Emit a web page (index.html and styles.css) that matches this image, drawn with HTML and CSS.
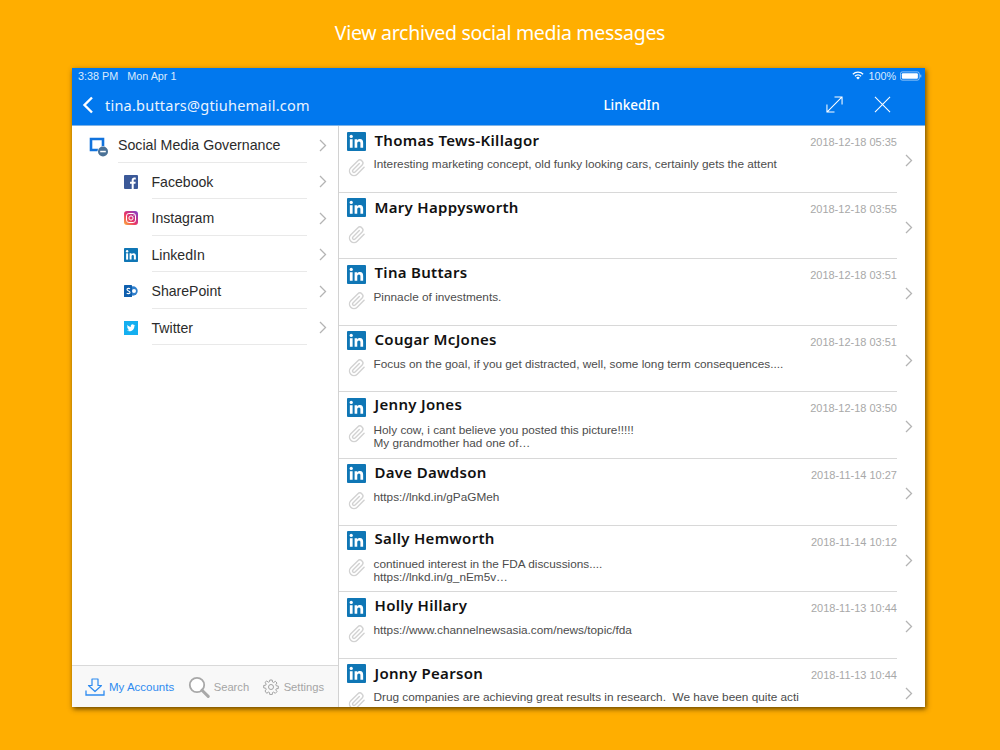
FILE: index.html
```html
<!DOCTYPE html>
<html lang="en">
<head>
<meta charset="utf-8">
<title>View archived social media messages</title>
<link rel="stylesheet" href="styles.css">
</head>
<body>
<svg class="defs" width="0" height="0" aria-hidden="true">
  <symbol id="li" viewBox="0 0 20 20"><rect width="20" height="20" rx="1" fill="#0f76b5"/><rect x="3" y="7.6" width="2.9" height="9" fill="#fff"/><circle cx="4.45" cy="4.7" r="1.7" fill="#fff"/><path d="M8 7.6h2.8v1.3c.6-1 1.6-1.5 2.9-1.5 2.4 0 3.3 1.6 3.3 4v5.2h-2.9v-4.7c0-1.2-.4-2-1.5-2-1.200 0-1.800.8-1.800 2.100v4.600H8z" fill="#fff"/></symbol>
  <symbol id="clip" viewBox="0 0 24 24"><path d="M21.440 11.050l-9.190 9.190a6 6 0 0 1-8.490-8.490l9.190-9.190a4 4 0 0 1 5.660 5.660l-9.200 9.190a2 2 0 0 1-2.830-2.830l8.490-8.480" fill="none" stroke="#d2d2d2" stroke-width="1.900" stroke-linecap="round" stroke-linejoin="round"/></symbol>
  <symbol id="chev" viewBox="0 0 8 13"><path d="M1 1l5.500 5.500L1 12" fill="none" stroke="currentColor" stroke-width="1.300"/></symbol>
</svg>

<h1 class="caption">View archived social media messages</h1>

<main class="device">
  <div class="status">
    <span>3:38 PM</span><span class="status-date">Mon Apr 1</span>
    <span class="status-right">
      <svg class="wifi" viewBox="0 0 14 10"><path d="M7 9.800 4.900 7.500a3 3 0 0 1 4.200 0z" fill="#fff"/><path d="M3.400 5.800a5 5 0 0 1 7.200 0M1 3.500a8.400 8.400 0 0 1 12 0" fill="none" stroke="#fff" stroke-width="1.500"/></svg>
      <span>100%</span>
      <svg class="battery" viewBox="0 0 24 10"><rect x=".5" y=".5" width="20.500" height="9" rx="2" fill="none" stroke="#fff" stroke-opacity=".6"/><rect x="2" y="2" width="17.500" height="6" rx="1" fill="#fff"/><rect x="22" y="3.500" width="1.200" height="3" fill="#fff" fill-opacity=".6"/></svg>
    </span>
  </div>

  <header class="navbar">
    <div class="nav-left">
      <svg class="back" viewBox="0 0 12 18"><path d="M10 1.500 2.500 9l7.500 7.500" fill="none" stroke="#fff" stroke-width="2.400"/></svg>
      <span class="account">tina.buttars@gtiuhemail.com</span>
    </div>
    <div class="nav-right">
      <span class="nav-title">LinkedIn</span>
      <svg class="nav-expand" viewBox="0 0 18 18"><path d="M1 17 17 1M9 1h8v8M1 9v8h8" fill="none" stroke="#fff" stroke-width="1.100"/></svg>
      <svg class="nav-close" viewBox="0 0 18 18"><path d="M1 1l16 16M17 1 1 17" fill="none" stroke="#fff" stroke-width="1.100"/></svg>
    </div>
  </header>

  <div class="panes">
    <aside class="sidebar">
      <ul class="menu">
        <li class="menu-root">
          <svg class="root-icon" viewBox="0 0 20 20"><path d="M2 2h12v11H2z" fill="none" stroke="#1173dd" stroke-width="2.600"/><circle cx="14" cy="14.500" r="5.500" fill="#fff"/><circle cx="14" cy="14.500" r="5" fill="#4a7196"/><rect x="11.200" y="13.800" width="5.600" height="1.500" fill="#fff"/></svg>
          <span class="menu-text">Social Media Governance</span>
          <svg class="chev"><use href="#chev"/></svg>
        </li>
        <li class="menu-item">
          <svg class="net-icon" viewBox="0 0 14 14"><rect width="14" height="14" rx="1" fill="#3b5998"/><path d="M9.700 14V8.800h1.700l.3-2H9.700V5.500c0-.6.200-1 1-1h1.100V2.700c-.2 0-.8-.1-1.500-.1-1.500 0-2.600.9-2.600 2.600v1.600H6v2h1.700V14z" fill="#fff"/></svg>
          <span class="menu-text">Facebook</span>
          <svg class="chev"><use href="#chev"/></svg>
        </li>
        <li class="menu-item">
          <svg class="net-icon" viewBox="0 0 14 14"><defs><linearGradient id="ig" x1="0" y1="1" x2="1" y2="0"><stop offset="0" stop-color="#fdb33a"/><stop offset=".45" stop-color="#e8336a"/><stop offset="1" stop-color="#7a3fd0"/></linearGradient></defs><rect width="14" height="14" rx="3" fill="url(#ig)"/><rect x="2.500" y="2.500" width="9" height="9" rx="2.400" fill="none" stroke="#fff"/><circle cx="7" cy="7" r="2.100" fill="none" stroke="#fff"/><circle cx="10" cy="4" r=".6" fill="#fff"/></svg>
          <span class="menu-text">Instagram</span>
          <svg class="chev"><use href="#chev"/></svg>
        </li>
        <li class="menu-item">
          <svg class="net-icon"><use href="#li"/></svg>
          <span class="menu-text">LinkedIn</span>
          <svg class="chev"><use href="#chev"/></svg>
        </li>
        <li class="menu-item">
          <svg class="net-icon" viewBox="0 0 14 14"><circle cx="9" cy="7" r="4.700" fill="#2f7fcc"/><circle cx="10" cy="7" r="2" fill="#fff"/><rect y="1" width="8" height="12" rx=".6" fill="#0f5fae"/><path d="M6 4.800C5.400 4.200 3 4 3 5.600c0 1.700 3 1.100 3 2.800 0 1.600-2.500 1.400-3.300.7" fill="none" stroke="#fff" stroke-width="1.100"/></svg>
          <span class="menu-text">SharePoint</span>
          <svg class="chev"><use href="#chev"/></svg>
        </li>
        <li class="menu-item">
          <svg class="net-icon" viewBox="0 0 14 14"><rect width="14" height="14" fill="#14aff0"/><path d="M11.300 4.500c-.3.100-.6.200-1 .3.400-.2.600-.6.800-1-.3.200-.7.300-1.100.4a1.700 1.700 0 0 0-3 1.600C5.500 5.700 4.200 5 3.400 3.900c-.5.800-.2 1.800.5 2.300-.3 0-.5-.1-.8-.2 0 .8.600 1.500 1.400 1.700-.3.100-.5.100-.8 0 .2.700.9 1.200 1.600 1.200-.7.600-1.700.8-2.600.7 2.900 1.800 7.700.4 7.700-4.600.4-.2.700-.5.900-.8z" fill="#fff"/></svg>
          <span class="menu-text">Twitter</span>
          <svg class="chev"><use href="#chev"/></svg>
        </li>
      </ul>
      <nav class="tabs">
        <span class="tab tab-active">
          <svg class="tab-accounts" viewBox="0 0 20 18"><path d="M7 1h6v6.500h3.500L10 13.500 3.500 7.500H7z" fill="none" stroke="#2e8bf0" stroke-width="1.200" stroke-linejoin="round"/><path d="M1 12.500v4.500h18v-4.500" fill="none" stroke="#2e8bf0" stroke-width="1.300"/></svg>
          My Accounts
        </span>
        <span class="tab">
          <svg class="tab-search" viewBox="0 0 22 22"><circle cx="9" cy="9" r="7.200" fill="#fff" stroke="#a8a8a8" stroke-width="1.800"/><path d="M14 14.200 20.200 20.400" stroke="#a8a8a8" stroke-width="3" stroke-linecap="round"/></svg>
          Search
        </span>
        <span class="tab">
          <svg class="tab-gear" viewBox="0 0 16 16"><circle cx="8" cy="8" r="2.500" fill="none" stroke="#999" stroke-width=".9"/><path d="M6.800 1h2.400l.3 2 1.100.5 1.700-1.200 1.700 1.700-1.200 1.700.5 1.100 2 .3v2.400l-2 .3-.5 1.100 1.200 1.700-1.700 1.700-1.700-1.200-1.100.5-.3 2H6.800l-.3-2-1.100-.5-1.700 1.200L2 12l1.200-1.700-.5-1.100-2-.3V6.500l2-.3.500-1.100L2 3.400 3.700 2l1.700 1.200 1.100-.5z" fill="none" stroke="#999" stroke-width=".9" stroke-linejoin="round"/></svg>
          Settings
        </span>
      </nav>
    </aside>

    <section class="messages">
      <article class="msg">
        <svg class="msg-li"><use href="#li"/></svg>
        <svg class="msg-clip"><use href="#clip"/></svg>
        <div class="msg-top"><h2 class="msg-name">Thomas Tews-Killagor</h2><time class="msg-time">2018-12-18 05:35</time></div>
        <p class="msg-text">Interesting marketing concept, old funky looking cars, certainly gets the attent</p>
        <svg class="chev msg-chev"><use href="#chev"/></svg>
      </article>
      <article class="msg">
        <svg class="msg-li"><use href="#li"/></svg>
        <svg class="msg-clip"><use href="#clip"/></svg>
        <div class="msg-top"><h2 class="msg-name">Mary Happysworth</h2><time class="msg-time">2018-12-18 03:55</time></div>
        <p class="msg-text"></p>
        <svg class="chev msg-chev"><use href="#chev"/></svg>
      </article>
      <article class="msg">
        <svg class="msg-li"><use href="#li"/></svg>
        <svg class="msg-clip"><use href="#clip"/></svg>
        <div class="msg-top"><h2 class="msg-name name-high">Tina Buttars</h2><time class="msg-time">2018-12-18 03:51</time></div>
        <p class="msg-text">Pinnacle of investments.</p>
        <svg class="chev msg-chev"><use href="#chev"/></svg>
      </article>
      <article class="msg">
        <svg class="msg-li"><use href="#li"/></svg>
        <svg class="msg-clip"><use href="#clip"/></svg>
        <div class="msg-top"><h2 class="msg-name name-high">Cougar McJones</h2><time class="msg-time">2018-12-18 03:51</time></div>
        <p class="msg-text">Focus on the goal, if you get distracted, well, some long term consequences....</p>
        <svg class="chev msg-chev"><use href="#chev"/></svg>
      </article>
      <article class="msg">
        <svg class="msg-li"><use href="#li"/></svg>
        <svg class="msg-clip"><use href="#clip"/></svg>
        <div class="msg-top"><h2 class="msg-name name-higher">Jenny Jones</h2><time class="msg-time">2018-12-18 03:50</time></div>
        <p class="msg-text">Holy cow, i cant believe you posted this picture!!!!!<br>My grandmother had one of…</p>
        <svg class="chev msg-chev"><use href="#chev"/></svg>
      </article>
      <article class="msg">
        <svg class="msg-li"><use href="#li"/></svg>
        <svg class="msg-clip"><use href="#clip"/></svg>
        <div class="msg-top"><h2 class="msg-name name-high">Dave Dawdson</h2><time class="msg-time">2018-11-14 10:27</time></div>
        <p class="msg-text">https://lnkd.in/gPaGMeh</p>
        <svg class="chev msg-chev"><use href="#chev"/></svg>
      </article>
      <article class="msg">
        <svg class="msg-li"><use href="#li"/></svg>
        <svg class="msg-clip"><use href="#clip"/></svg>
        <div class="msg-top"><h2 class="msg-name name-higher">Sally Hemworth</h2><time class="msg-time">2018-11-14 10:12</time></div>
        <p class="msg-text">continued interest in the FDA discussions....<br>https://lnkd.in/g_nEm5v…</p>
        <svg class="chev msg-chev"><use href="#chev"/></svg>
      </article>
      <article class="msg">
        <svg class="msg-li"><use href="#li"/></svg>
        <svg class="msg-clip"><use href="#clip"/></svg>
        <div class="msg-top"><h2 class="msg-name name-high">Holly Hillary</h2><time class="msg-time">2018-11-13 10:44</time></div>
        <p class="msg-text">https://www.channelnewsasia.com/news/topic/fda</p>
        <svg class="chev msg-chev"><use href="#chev"/></svg>
      </article>
      <article class="msg">
        <svg class="msg-li"><use href="#li"/></svg>
        <svg class="msg-clip"><use href="#clip"/></svg>
        <div class="msg-top"><h2 class="msg-name">Jonny Pearson</h2><time class="msg-time">2018-11-13 10:44</time></div>
        <p class="msg-text">Drug companies are achieving great results in research.&nbsp; We have been quite acti</p>
        <svg class="chev msg-chev"><use href="#chev"/></svg>
      </article>
    </section>
  </div>
</main>
</body>
</html>
```
FILE: styles.css
```css
* { box-sizing: border-box; }
html, body { height: 100%; }
body {
  margin: 0;
  height: 750px;
  overflow: hidden;
  background: #ffae00;
  font-family: "Liberation Sans", Arial, sans-serif;
  display: flex;
  flex-direction: column;
  align-items: center;
}
.defs { display: block; height: 0; }
.caption {
  margin: 0;
  height: 68px;
  width: 100%;
  padding-top: 19px;
  text-align: center;
  color: #fff;
  font: 400 19.500px/28px "Noto Sans", sans-serif;
  letter-spacing: -.3px;
}
.device {
  margin-left: -3px;
  width: 853px;
  height: 639px;
  background: #fff;
  box-shadow: 1px 2px 5px rgba(60, 40, 0, .8);
  display: flex;
  flex-direction: column;
  overflow: hidden;
}
.status {
  height: 17px;
  flex: none;
  background: #0178ee;
  color: #dbeafd;
  font-size: 10.800px;
  line-height: 16px;
  padding: 0 3px 2px 6px;
  display: flex;
  align-items: center;
}
.status-date { margin-left: 9px; }
.status-right { margin-left: auto; display: flex; align-items: center; gap: 4px; }
.wifi { width: 12px; height: 9px; }
.battery { width: 22px; height: 10px; }
.navbar {
  height: 41px;
  flex: none;
  background: #0178ee;
  border-bottom: 1px solid #7fb3e6;
  display: flex;
  color: #fff;
}
.nav-left { width: 267px; flex: none; display: flex; align-items: center; padding-left: 10px; padding-bottom: 1px; }
.back { width: 12px; height: 18px; }
.account { margin-left: 11px; font: 400 14.500px/20px "Noto Sans", sans-serif; letter-spacing: .22px; color: #eaf3fe; }
.nav-right { flex: 1; display: flex; align-items: center; position: relative; padding-bottom: 1px; }
.nav-title { position: absolute; left: 0; right: 0; text-align: center; margin-left: -1px; font: 500 13.500px/20px "Noto Sans", sans-serif; }
.nav-expand { width: 17px; height: 17px; margin-left: auto; position: relative; }
.nav-close { width: 17px; height: 17px; margin-left: 31px; margin-right: 34px; position: relative; }
.panes { flex: 1; display: flex; min-height: 0; }
.sidebar {
  width: 267px;
  flex: none;
  border-right: 1px solid #d2d2d2;
  display: flex;
  flex-direction: column;
}
.menu { list-style: none; margin: 0; padding: 0; flex: 1; }
.menu-root, .menu-item {
  height: 36.500px;
  display: flex;
  align-items: center;
  position: relative;
}
.root-icon { width: 20px; height: 20px; position: absolute; left: 17px; top: 11px; }
.net-icon { width: 14px; height: 14px; position: absolute; left: 51.500px; top: 12px; }
.menu-text {
  height: 36.500px;
  line-height: 38px;
  color: #2b2b2b;
  border-bottom: 1px solid #e9e9e9;
  font-size: 14.200px;
}
.menu-root .menu-text { margin-left: 46px; width: 189px; }
.menu-item .menu-text { margin-left: 79.500px; width: 155.500px; font-size: 14.100px; }
.chev { width: 8px; height: 13px; color: #b4b4b4; position: absolute; left: 247px; top: 12.500px; }
.tabs {
  height: 42px;
  flex: none;
  background: #f8f8f8;
  border-top: 1px solid #d9d9d9;
  display: flex;
  align-items: center;
  font-size: 11.200px;
  color: #a5a5a5;
  padding-left: 13px;
  gap: 13.500px;
}
.tab { display: flex; align-items: center; gap: 4px; white-space: nowrap; }
.tab:last-child { gap: 5px; }
.tab-active { color: #2e8bf0; font-size: 11.500px; }
.tab-accounts { width: 20px; height: 18px; }
.tab-search { width: 22px; height: 22px; }
.tab-gear { width: 16px; height: 16px; }
.messages { flex: 1; overflow: hidden; }
.msg {
  height: 66.600px;
  position: relative;
  padding-left: 34.500px;
  margin-right: 28px;
  border-bottom: 1px solid #d8d8d8;
}
.msg-li { width: 19px; height: 19px; position: absolute; left: 8px; top: 5.500px; }
.msg-clip { width: 18px; height: 18px; position: absolute; left: 8.500px; top: 33px; }
.msg-top { display: flex; justify-content: space-between; align-items: flex-start; padding-top: 4px; height: 25px; }
.msg-name {
  margin: 0 0 0 1px;
  font: 600 15px/20px "Noto Sans", sans-serif;
  letter-spacing: .3px;
  color: #111;
}
.name-high { margin-top: -1px; }
.name-higher { margin-top: -2px; }
.msg-time { font-size: 11px; line-height: 13px; color: #a8a8a8; margin-top: 6px; }
.msg-text {
  margin: 7px 0 0;
  font-size: 11.800px;
  line-height: 13px;
  color: #4c4c4c;
  white-space: nowrap;
}
.msg-chev { left: 566px; top: 28px; }
```
